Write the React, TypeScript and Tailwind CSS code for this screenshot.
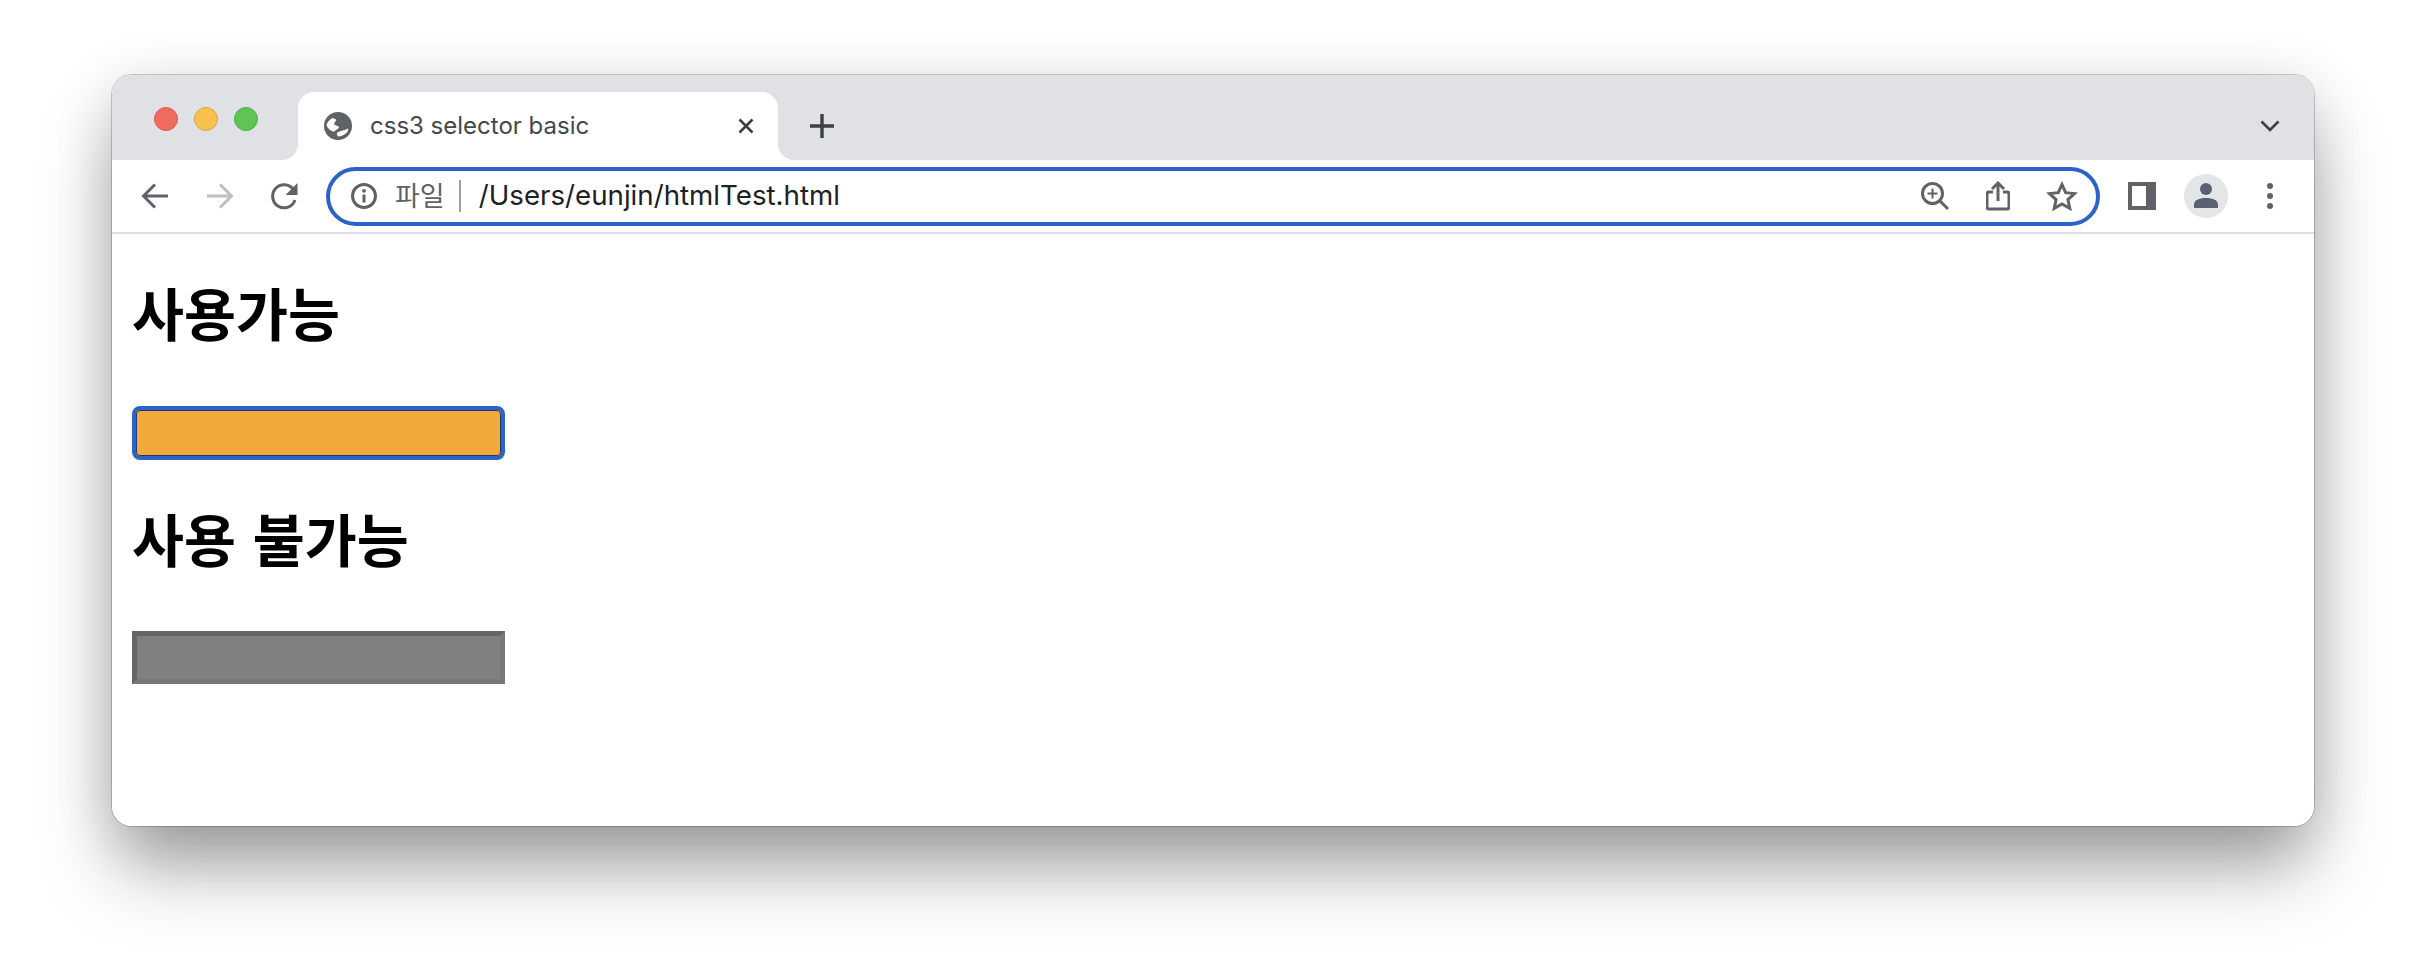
const sans = "font-['Inter','Liberation_Sans','Noto_Sans_CJK_KR',sans-serif]";

function Globe() {
  return (
    <svg width="28" height="28" viewBox="0 0 28 28">
      <circle cx="14" cy="14" r="14" fill="#5f6368" />
      <path d="M2.500 13C3.500 10 5.500 7.500 8.500 6L12 7.500C12.500 9 10.500 10 10 12C11.500 14 14.500 13.500 15 15.500C14 17.500 11.500 17.500 10.500 19.500C7 19.500 4 17 2.500 13z" fill="white" />
      <path d="M13 21C15.500 18.500 20 19 24 16.500C24.500 18.500 23.500 20.500 21 22C19 23.500 16.500 24.500 14.500 24.500C13.500 24 12.500 22.500 13 21z" fill="white" />
    </svg>
  );
}

function TabStrip() {
  return (
    <div className="flex h-[85px] bg-white">
      {/* traffic lights */}
      <div className="flex w-[186px] items-start gap-[16px] rounded-br-[16px] bg-[#dfe1e5] pl-[42px] pt-[32px]">
        <span className="size-[24px] rounded-full border border-[#dc5a50] bg-[#f06b60]" />
        <span className="size-[24px] rounded-full border border-[#dca53f] bg-[#f7c04f]" />
        <span className="size-[24px] rounded-full border border-[#52ad46] bg-[#5fc453]" />
      </div>
      <div className="w-[480px] bg-[#dfe1e5] pt-[17px]">
        <div className="flex h-[68px] items-center rounded-t-[16px] bg-white pl-[26px] pr-[22px]">
          <Globe />
          <span className={`ml-[18px] text-[24px] leading-none text-[#44474b] ${sans}`}>css3 selector basic</span>
          <svg className="ml-auto" width="20" height="20" viewBox="0 0 20 20" stroke="#3c4043" strokeWidth="2.6" fill="none">
            <path d="M3.5 3.5l13 13M16.5 3.5l-13 13" />
          </svg>
        </div>
      </div>
      <div className="flex flex-1 items-center justify-between rounded-bl-[16px] bg-[#dfe1e5] pl-[31px] pr-[34px] pt-[17px]">
        <svg width="26" height="26" viewBox="0 0 26 26" stroke="#3c4043" strokeWidth="3.4" fill="none">
          <path d="M13 1v24M1 13h24" />
        </svg>
        <svg width="20" height="12" viewBox="0 0 20 12" stroke="#3c4043" strokeWidth="2.6" fill="none">
          <path d="M1.5 1.5L10 10l8.5-8.5" />
        </svg>
      </div>
    </div>
  );
}

function Toolbar() {
  return (
    <div className="flex h-[74px] items-center border-b-2 border-[#dadce0] bg-white pl-[29px]">
      <svg width="28" height="28" viewBox="0 0 28 28" stroke="#5f6368" strokeWidth="3" fill="none">
        <path d="M27 14H3M14 2.500L2.500 14 14 25.500" />
      </svg>
      <svg className="ml-[37px]" width="28" height="28" viewBox="0 0 28 28" stroke="#bdbfc1" strokeWidth="3" fill="none">
        <path d="M1 14h24M14 2.500L25.500 14 14 25.500" />
      </svg>
      <svg className="ml-[36px]" width="30" height="30" viewBox="0 0 30 30" fill="none">
        <path d="M25 19a11.500 11.500 0 1 1-1.600-10.500" stroke="#5f6368" strokeWidth="3" />
        <path d="M27.500 2v12H15.500z" fill="#5f6368" />
      </svg>
      {/* address bar */}
      <div className="ml-[26px] flex h-[59px] w-[1774px] items-center rounded-full border-[4px] border-[#2b63c9] pl-[20px]">
        <svg width="28" height="28" viewBox="0 0 28 28" fill="none">
          <circle cx="14" cy="14" r="11.500" stroke="#5f6368" strokeWidth="3" />
          <path d="M14 12.500V20.500" stroke="#5f6368" strokeWidth="3" />
          <circle cx="14" cy="8.800" r="1.900" fill="#5f6368" />
        </svg>
        <span className={`ml-[17px] text-[27px] leading-none text-[#5f6368] ${sans}`}>파일</span>
        <span className="ml-[14px] h-[32px] w-[2px] bg-[#9aa0a6]" />
        <span className={`ml-[18px] text-[27.7px] leading-none text-[#202124] ${sans}`}>/Users/eunjin/htmlTest.html</span>
        <svg className="ml-auto" width="30" height="30" viewBox="0 0 30 30" fill="none" stroke="#5f6368" strokeWidth="3">
          <circle cx="12.500" cy="12.500" r="10" />
          <path d="M19.500 19.500L28 28" />
          <path d="M12.500 7.500v10M7.500 12.500h10" strokeWidth="2" />
        </svg>
        <svg className="ml-[36px]" width="24" height="30" viewBox="0 0 24 30" fill="none" stroke="#5f6368" strokeWidth="3">
          <path d="M7 11H3a2 2 0 0 0-2 2v13a2 2 0 0 0 2 2h18a2 2 0 0 0 2-2V13a2 2 0 0 0-2-2h-4" />
          <path d="M12 20V2M6 8l6-6 6 6" />
        </svg>
        <svg className="ml-[36px] mr-[18px]" width="32" height="30" viewBox="0 0 32 30" fill="none" stroke="#5f6368" strokeWidth="3">
          <path d="M16 3.500l3.700 8.200 8.900.9-6.700 6 1.900 8.800L16 23l-7.800 4.400 1.900-8.800-6.700-6 8.900-.9z" />
        </svg>
      </div>
      {/* side panel */}
      <span className="ml-[28px] flex h-[28px] w-[28px] bg-[#5f6368] p-[4px] pr-[10px]">
        <span className="flex-1 bg-white" />
      </span>
      <span className="ml-[28px] flex size-[44px] items-center justify-center rounded-full bg-[#e3e5e8]">
        <svg width="24" height="26" viewBox="0 0 24 26" fill="#5a6170">
          <circle cx="12" cy="6" r="6" />
          <path d="M0 25v-3c0-5 5-7 12-7s12 2 12 7v3z" />
        </svg>
      </span>
      <span className="ml-[39px] flex flex-col gap-[4px]">
        <span className="size-[6px] rounded-full bg-[#5f6368]" />
        <span className="size-[6px] rounded-full bg-[#5f6368]" />
        <span className="size-[6px] rounded-full bg-[#5f6368]" />
      </span>
    </div>
  );
}

export default function App() {
  return (
    <div className="h-[974px] w-[2426px] overflow-hidden bg-white pl-[112px] pt-[75px]">
      <div className="flex h-[751px] w-[2202px] flex-col overflow-hidden rounded-[20px] shadow-[0_0_0_1px_rgba(0,0,0,0.2),0_48px_74px_-6px_rgba(0,0,0,0.34),0_10px_60px_rgba(0,0,0,0.14)]">
        <TabStrip />
        <Toolbar />
        {/* page */}
        <div className="flex-1 bg-white px-[20px] font-['Noto_Sans_CJK_KR','Liberation_Sans',sans-serif]">
          <h2 className="mt-[37px] text-[56.5px] font-bold leading-[80px] text-black">사용가능</h2>
          <div className="mt-[55px] box-border h-[54px] w-[373px] rounded-[8px] border-[4px] border-[#2b63c9] bg-[#f2a93b] outline outline-1 -outline-offset-5 outline-[#1f3a70]" />
          <h2 className="mt-[37px] text-[56.5px] font-bold leading-[80px] text-black [word-spacing:4px]">사용 불가능</h2>
          <div className="mt-[54px] box-border h-[53px] w-[373px] border-[5px] border-t-[#666666] border-r-[#787878] border-b-[#787878] border-l-[#666666] bg-[#808080]" />
        </div>
      </div>
    </div>
  );
}
